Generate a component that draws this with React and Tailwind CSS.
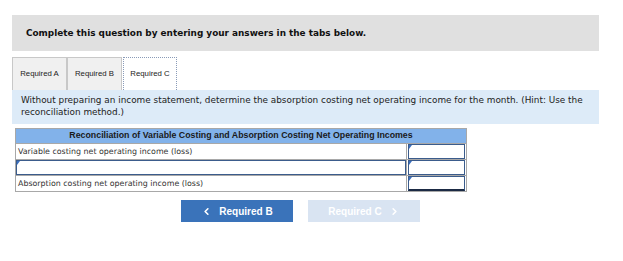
import React from 'react';
import { ChevronLeft, ChevronRight } from 'lucide-react';

const verdana = { fontFamily: '"DejaVu Sans", Verdana, sans-serif' };
const arial = { fontFamily: '"Liberation Sans", Arial, sans-serif' };

function Tab({ label, active }) {
    return (
        <div
            style={arial}
            className={
                active
                    ? "h-[33px] w-[54px] flex items-center justify-center bg-white border border-dotted border-[#8a9bb8] border-b-0 text-[7.8px] text-[#222] relative z-10"
                    : "h-[33px] w-[55px] flex items-center justify-center bg-[#f0f0f0] border border-[#c8c8c8] border-b-0 text-[7.8px] text-[#222]"
            }
        >
            {label}
        </div>
    );
}

function InputCell({ total }) {
    return (
        <td className="p-0 border border-[#a8a8a8]">
            <div className={"relative h-[15px] mx-px border border-[#3b5c8c] " + (total ? "border-b-2 border-b-[#1b2a44]" : "")}>
                <span className="absolute left-0 top-0 w-0 h-0 border-t-[4px] border-t-[#3a6fc0] border-r-[3px] border-r-transparent" />
            </div>
        </td>
    );
}

export default function App() {
    return (
        <div className="w-[623px] h-[261px] bg-white pt-[15px] px-[12px] text-[#222]" style={verdana}>
            <div className="w-[587px] h-[36px] bg-[#e0e0e0] flex items-center pl-[14px] pt-[1px]">
                <span className="text-[8.9px] font-bold text-[#111]">Complete this question by entering your answers in the tabs below.</span>
            </div>

            <div className="mt-[6px] flex items-end">
                <Tab label="Required A" />
                <Tab label="Required B" />
                <div className="w-[1px]" />
                <Tab label="Required C" active />
            </div>

            <div className="w-[587px] h-[34px] bg-[#ddebf8] px-[9px] pt-[4px] text-[8.9px] leading-[12px] text-[#222]">
                Without preparing an income statement, determine the absorption costing net operating income for the month. (Hint: Use the reconciliation method.)
            </div>

            <table className="ml-[3px] mt-[4px] w-[452px] border-collapse">
                <tbody>
                    <tr>
                        <th
                            colSpan={2}
                            className="h-[15px] p-0 bg-[#82b2ea] border border-[#a8a8a8] text-[8.8px] font-bold text-[#1a1a1a] text-center"
                            style={arial}
                        >
                            Reconciliation of Variable Costing and Absorption Costing Net Operating Incomes
                        </th>
                    </tr>
                    <tr>
                        <td className="h-[16px] w-[391px] p-0 pl-[2px] border border-[#a8a8a8] text-[7.9px] text-[#333]">
                            Variable costing net operating income (loss)
                        </td>
                        <InputCell />
                    </tr>
                    <tr>
                        <td className="h-[16px] p-0 border border-[#a8a8a8]">
                            <div className="relative h-[15px] border border-[#3b5c8c]">
                                <span className="absolute left-0 top-0 w-0 h-0 border-t-[4px] border-t-[#3a6fc0] border-r-[3px] border-r-transparent" />
                            </div>
                        </td>
                        <InputCell />
                    </tr>
                    <tr>
                        <td className="h-[16px] p-0 pl-[2px] border border-[#a8a8a8] text-[7.9px] text-[#333]">
                            Absorption costing net operating income (loss)
                        </td>
                        <InputCell total />
                    </tr>
                </tbody>
            </table>

            <div className="mt-[8px] ml-[169px] flex gap-[15px]" style={arial}>
                <div className="w-[112px] h-[22px] bg-[#3a73ba] flex items-center justify-center gap-[7px] text-white text-[10px] font-bold">
                    <ChevronLeft size={11} strokeWidth={3.5} />
                    <span>Required B</span>
                </div>
                <div className="w-[112px] h-[22px] bg-[#d9e4f2] flex items-center justify-center gap-[7px] text-white text-[10px] font-bold">
                    <span>Required C</span>
                    <ChevronRight size={11} strokeWidth={3.5} />
                </div>
            </div>
        </div>
    );
}
